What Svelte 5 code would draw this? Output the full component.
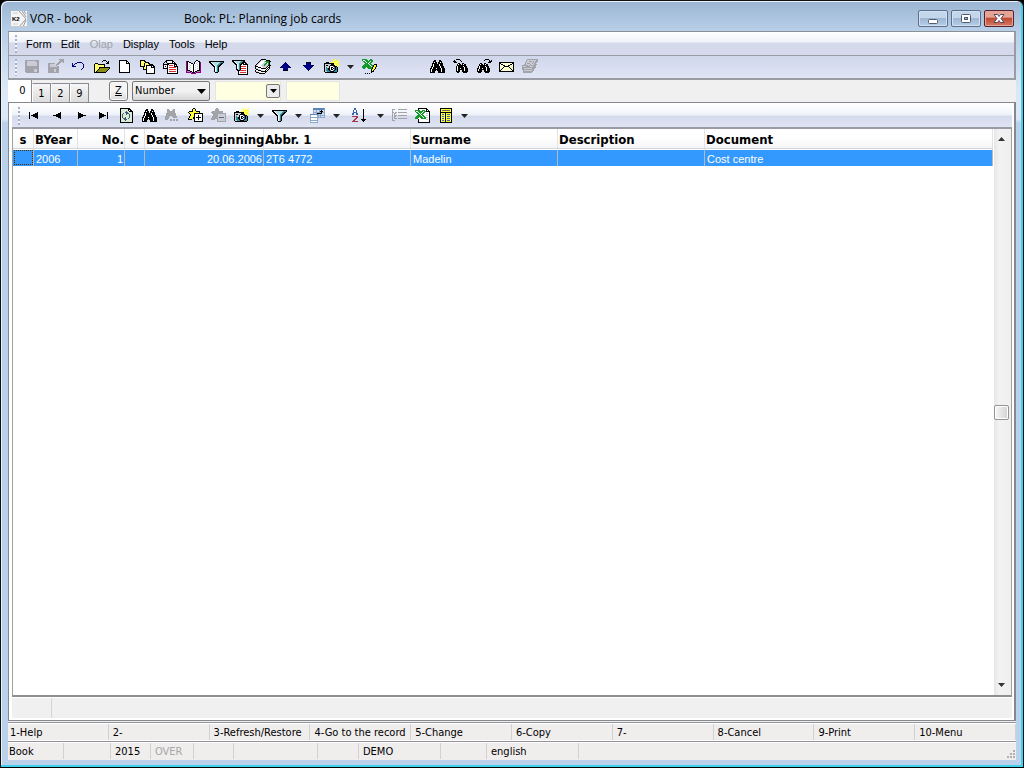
<script>
  const palette = {
    k: '#000000', g: '#a2a4aa', l: '#c9ccd6', d: '#666a70', w: '#ffffff', y: '#ffff31', i: '#ffffa8',
    o: '#8c8c18', b: '#000084', t: '#2a8c94', c: '#b4dce6', r: '#d83030', p: '#8c0084', q: '#d070cc',
    n: '#109a28', m: '#8ca8c8', e: '#d8ecd8', s: '#405878', u: '#3a62b0', a: '#a03848', v: '#d4e0ee', f: '#5a84b8'
  };

  const icons = {
    save: ['', 'gggggggggggggg', 'gglllllllllggg', 'ggllllllllllgg', 'ggllllllllllgg', 'ggllllllllllgg', 'ggllllllllllgg', 'gggggggggggggg', 'gggggggggggggg', 'gggggggggggggg', 'ggggggggglllgg', 'ggggggggglllgg', 'ggggggggglllgg', '.ggggggggggggg'],
    export: ['...........ggggg', '............gggg', '...........ggggg', '..........ggg..g', 'ggggggg..ggg....', 'gglllll.ggg.....', 'ggllllllg.......', 'gglllllllgg.....', 'ggggggggggg.....', 'ggggggggggg.....', 'ggggggllggg.....', 'ggggggllggg.....', 'ggggggllggg.....', 'ggggggggggg.....'],
    undo: ['', '', '', '......bbbbb.....', '.b..bb.....b....', '.b.b........b...', '.bb.........b...', '.bbbb.......b...', '............b...', '...........b....', '..........b.....'],
    open: ['', '.........kkk....', '........k...k.k.', '.............kk.', '.kkk........kkk.', 'kyiykkkkkkk.....', 'kyiyiyiyiyk.....', 'kiyiyiyiyik.....', 'kyiyikkkkkkkkkkk', 'kiyiykoooooooook', 'kyiykoooooooook.', 'kiykoooooooook..', 'kykoooooooook...', 'kkkkkkkkkkkk....'],
    page: ['', '..kkkkkkkk......', '..kwwwwwwkk.....', '..kwwwwwwkwk....', '..kwwwwwwkkkk...', '..kwwwwwwwwwk...', '..kwwwwwwwwwk...', '..kwwwwwwwwwk...', '..kwwwwwwwwwk...', '..kwwwwwwwwwk...', '..kwwwwwwwwwk...', '..kwwwwwwwwwk...', '..kwwwwwwwwwk...', '..kkkkkkkkkkk...'],
    pages: ['', 'kkkkk...........', 'kyiykk..........', 'kiyiykkkk.......', 'kyiykyiykk......', 'kiyikiyiykkkk...', 'kyiykykkkkkkkk..', 'kkkkkikwwwwkwkk.', '...kyikwwwwkkkk.', '...kiykwwwwwwwk.', '...kkkkwwwwwwwk.', '......kwwwwwwwk.', '......kwwwwwwwk.', '......kwwwwwwwk.', '......kkkkkkkkk.'],
    copy: ['', '...kkkkkkk......', '..kkwwwwwkk.....', '.k.k.wwwwkwk....', 'k...kkkkkkkkk...', 'kkkkkkwwwwwkkk..', 'kwwwkwrrrrwkwk..', 'kwkwkwwwwwwkkkk.', 'kwwwkwrrrrrrrwk.', 'kkkkkwwwwwwwwwk.', '....kwrrrrrrrwk.', '....kwwwwwwwwwk.', '....kwrrrrrrrwk.', '....kwwwwwwwwwk.', '....kkkkkkkkkkk.'],
    book: ['', '..........kk....', 'pkk......kwwkk..', 'pkwkk...kwwlwkp.', 'pkwwwkk.kwlwwkp.', 'pkwlwwwkwwwlwkp.', 'pkwwlwwkwlwwwkp.', 'pkwlwwwkwwwlwkp.', 'pkwwlwwkwlwwwkp.', 'pkwlwwwkwwwlwkp.', 'pkwwlwwkwlwwwkp.', 'pkkkwwwkwwwkkkp.', 'pqqqkkwkwkkqqqp.', 'pppppqkkkqppppp.', '.....ppppp......'],
    filter: ['', '', 'kkkkkkkkkkkkkkk.', 'kkwcccccccctttk.', '.kkwccccccttkk..', '..kkwccccttkk...', '...kkwccttkk....', '....kkwctkk.....', '.....kwctk......', '.....kwctk......', '.....kwctk......', '.....kwctk......', '.....kwctk......', '......kkk.......'],
    filterdoc: ['', 'kkkkkkkkkkkkk...', 'kkwccccccttkk...', '.kkwccccttkkkk..', '..kkwccttkkkwkk.', '...kkwctkkwkkkkk', '....kwctkwwwwwwk', '....kwctkrrrrrwk', '....kwctkwwwwwwk', '....kwctkrrrrrwk', '....kkctkwwwwwwk', '.....kkkrrrrrrwk', '......kwwwwwwwwk', '......kwrrrrrrwk', '......kwwwwwwwwk', '......kkkkkkkkkk'],
    books: ['......kkkkk.....', '.....kllwwwkkkk.', '....klwwwlnnnnkk', '...klwwwwlwnnnk.', '..klwwwwllnnwnk.', '.klwwwwllnnllnk.', 'klwwwwlllnlllkkk', 'kkkwwwwlllllkwk.', 'kwwkkkwwlllkwkk.', 'kllwwwkkkkkwkwk.', '.kkllwwwwwwkwk..', 'kwwkkkllwwkwk...', 'kllwwwkkkkkk....', '.kkkllwwwwk.....', '....kkkkkk......'],
    up: ['', '', '', '.......k........', '......bbb.......', '.....bbbbb......', '....bbbbbbb.....', '...bbbbbbbbb....', '..kbbbbbbbbbk...', '.....bbbbb......', '.....bbbbb......', '.....kkkkk......'],
    down: ['', '', '', '.....kkkkk......', '.....bbbbb......', '.....bbbbb......', '..kbbbbbbbbbk...', '...bbbbbbbbb....', '....bbbbbbb.....', '.....bbbbb......', '......bbb.......', '.......k........'],
    camera: ['........y..y..y.', '.........y.y.y..', '.........yyyyyy.', '..kkk..yyyiyiyy.', 'kkkkkkkkkkyyyy..', 'kllllllkkkyiyyy.', 'klkkllkkkkkyy.y.', 'kllllkwwwukkky..', 'kltllkwkkwuktk..', 'klttkkwkwkuktk..', 'klttkkwkkwuktk..', 'kltttkuwwukttk..', 'klltttkkkktttk..', '.kkkkkkkkkkkk...'],
    excelEdit: ['nnnnn...nn......', 'nwwnnn.nnnn.....', '.nnwnnnnwnn.....', '..nnwnnwnn......', '...nnnwnn.......', '..nnnnnwnn..kkk.', '.nnnnnnnwnnkyyk.', 'nnnnnnnnnwnkyyk.', 'nnnn.nnnnnkyyk..', '.nn...nnnnkyyk..', '.........kyyk...', '.........kyk....', '.........kkk....', '.........k......', '...k.k.k........'],
    bino: ['', '....kk...kk.....', '...kkk...kkk....', '...kwkk.kkwk....', '..kkkkk.kkkkk...', '..kwkkkkkwkkk...', '..kwkkkkkwkkk...', '.kkwkkkkkkwkkk..', '.kwkkkkkkkwkkk..', 'kkwkkkwkkkkwkkk.', 'kwkkkkkkkkkwkkk.', 'kwkkkk.kkkkwkkk.', 'kwkkk...kkkwkkk.', 'kkkkk...kkkkkkk.'],
    binoBack: ['...kkkk.........', '.k.....k........', 'kkk.....k.......', '.kkk............', '.....kk..kk.....', '....kwkk.kwkk...', '....kkkkkkkkk...', '...kwkkkkkwkkk..', '...kwkkkkkkwkk..', '...kwkkwkkkwkkk.', '...kwkkkkkkwkkk.', '...kwkk..kkwkkk.', '...kkkk..kkkkkk.', '....kk....kkkk..'],
    binoNext: ['.........kkkk...', '........k....k.k', '.............kkk', '............kkk.', '....kk..kk......', '...kwkk.kwkk....', '...kkkkkkkkk....', '..kwkkkkkwkkk...', '..kwkkkkkkwkk...', '.kkwkkwkkkwkkk..', '.kwkkkkkkkwkkk..', '.kwkkk..kkwkkk..', '.kkkkk..kkkkkk..', '..kkk....kkkk...'],
    mail: ['', '', '', 'kkkkkkkkkkkkkkk.', 'kkwiwiwiwiwiwkk.', 'kwkkwiwiwiwkkwk.', 'kiwikkwiwkkiwik.', 'kwiwikkkkkiwiwk.', 'kiwikiwiwikiwik.', 'kwikwiwiwiwkiwk.', 'kikwiwiwiwiwkik.', 'kkwiwiwiwiwiwkk.', 'kkkkkkkkkkkkkkk.'],
    edit: ['.....ggggggggggg', '....glllllllllgg', '....gllggglglggg', '...glllllllglgg.', '...glgggllglgg..', '..ggllllglllggg.', 'gggggglglggggg..', 'glllgggglllggg..', 'gggggggggggggg..', 'ggllllllllggg...', 'gggggggggggg....', '.gllllllllgg....', '.gggggggggg.....', '.ggggggggg......'],
    first: ['', '', '', '', '..k.......k.....', '..k.....kkk.....', '..k...kkkkk.....', '..k.kkkkkkk.....', '..k...kkkkk.....', '..k.....kkk.....', '..k.......k.....'],
    prev: ['', '', '', '', '..........k.....', '........kkk.....', '......kkkkk.....', '...kkkkkkkk.....', '......kkkkk.....', '........kkk.....', '..........k.....'],
    next: ['', '', '', '', '.....k..........', '.....kkk........', '.....kkkkk......', '.....kkkkkkkk...', '.....kkkkk......', '.....kkk........', '.....k..........'],
    last: ['', '', '', '', '...k.......k....', '...kkk.....k....', '...kkkkk...k....', '...kkkkkkk.k....', '...kkkkk...k....', '...kkk.....k....', '...k.......k....'],
    refresh: ['.kkkkkkkkkk.....', '.keeeeeeekkk....', '.keeeeeeekwkk...', '.keeeeeseekkkk..', '.keeeessseeeek..', '.keeseessseeek..', '.keseeeseeseek..', '.keseeeeeeseek..', '.keseeeeeeseek..', '.keseeseeeseek..', '.keessseeseeek..', '.keeessseeeeek..', '.keeeeseeeeeek..', '.keeeeeeeeeeek..', '.kkkkkkkkkkkkk..'],
    binoOff: ['', '..gg....gg......', '..ggg..ggg......', '..gggggggg......', '..gggggggg......', '.gggggggggg.....', '.gggggggggg.....', '.gggggggggg.....', 'ggggg..ggggg....', 'gggg....gggg....', 'gggg............', 'ggg..gg.gg.gg...', '.....gg.gg.gg...'],
    star: ['.....kk.........', '....kyyk........', '....kyyk........', '.kkkkyyykkkk....', 'kyyyyyyyyyyk....', '.kyyyykkkkkkkkk.', '..kyyykwwwwwwwk.', '..kyyykwwwkwwwk.', '.kyyyykwwwkwwwk.', '.kyyykkwkkkkkwk.', 'kyyyykkwwwkwwwk.', 'kkkk..kwwwkwwwk.', '......kwwwwwwwk.', '......kkkkkkkkk.'],
    starOff: ['.....gg.........', '....gggg........', '....gggg........', '.ggggggggggg....', 'gggggggggggg....', '.gggggggggggggg.', '..ggggglllllllg.', '..ggggglllllllg.', '.gggggglllllllg.', '.ggggggldddddlg.', 'ggggggglllllllg.', 'gggg..glllllllg.', '......glllllllg.', '......ggggggggg.'],
    sheets: ['...ffffffffffff.', '...fffffffffffm.', '...mvvmvvmvkvvm.', '...mvvmvvmkkkvm.', '...mmmmmmmmkmmm.', '...mvvmkkkkkvvm.', 'ffffffffmvmvvvm.', 'mwwwwwwmmmmmmmm.', 'mwwwwwwmmvmvvvm.', 'mmmmmmmmmmmmmmm.', 'mwwwwwwm........', 'mwwwwwwm........', 'mmmmmmmm........', 'mwwwwwwm........', 'mmmmmmmm........'],
    sort: ['...uu...........', '...uu.......k...', '..u..u......k...', '..u..u......k...', '..uuuu......k...', '.uu..uu.....k...', '.uu..uu.....k...', '............k...', '.aaaaaa.....k...', '.....aa.....k...', '....aa......k...', '...aa.....kkkkk.', '..aa.......kkk..', '.aaaaaa.....k...'],
    group: ['', 'ggg...ggggggggg.', 'g...............', 'g...............', 'gg.gg.ggggggggg.', 'g.gg............', 'g.g.............', 'g.ggg.ggggggggg.', 'g.gg............', 'g.g.............', 'g.ggg.ggggggggg.', 'g...............', 'ggg.............'],
    excel: ['...kkkkkkkkk....', '...kwwwwwwwkk...', 'nnnnnwwnnnwkwk..', 'nwwnnnnnwnnkkkk.', '.nnwnnnwnnwwwwk.', '..nnwnwnnwwllwk.', '...nnwnnwwwwwwk.', '..nnnnwnnwwllwk.', '.nnnnnnwnnwwwwk.', 'nnnnwnnnwnnllwk.', 'nnnwwwnnnnnwwwk.', '...kwwwwwwwllwk.', '...kwwwwwwwwwwk.', '...kwwwwwwwwwwk.', '...kkkkkkkkkkkk.'],
    list: ['..kkkkkkkkkkkk..', '..kyyyyyyyyyyk..', '..kyddddddddyk..', '..kyyyyyyyyyyk..', '..kkkkkkkkkkkk..', '..kyyyykyyyyyk..', '..kyuuykyuuuyk..', '..kyyyykyyyyyk..', '..kyuuykyuuuyk..', '..kyyyykyyyyyk..', '..kyuuykyuuuyk..', '..kyyyykyyyyyk..', '..kyuuykyuuuyk..', '..kyyyykyyyyyk..', '..kkkkkkkkkkkk..']
  };

  // Merge runs of equal pixels into one path for each colour.
  function toPaths(rows) {
    const out = {};
    rows.forEach((row, y) => {
      let x = 0;
      while (x < row.length) {
        const ch = row[x];
        let n = 1;
        while (row[x + n] === ch) n++;
        if (palette[ch]) out[ch] = (out[ch] ?? '') + `M${x} ${y}h${n}v1h-${n}z`;
        x += n;
      }
    });
    return Object.entries(out).map(([ch, d]) => ({ fill: palette[ch], d }));
  }

  const menus = ['Form', 'Edit', 'Olap', 'Display', 'Tools', 'Help'];
  const mainTools = [
    ['save', 'Save', true], ['export', 'Save and close', true], ['undo', 'Undo'], ['open', 'Open'], ['page', 'New'],
    ['pages', 'Copy pages'], ['copy', 'Locked copy'], ['book', 'Book'], ['filter', 'Filter'], ['filterdoc', 'Filter document'],
    ['books', 'Change book'], ['up', 'Previous'], ['down', 'Next'], ['camera', 'Snapshot'], ['arrow', 'Snapshot options'],
    ['excelEdit', 'Edit in Excel'], ['gap', ''], ['bino', 'Find'], ['binoBack', 'Find previous'], ['binoNext', 'Find next'],
    ['mail', 'Mail'], ['edit', 'Edit notes', true]
  ];
  const bookTools = [
    ['first', 'First record'], ['prev', 'Previous record'], ['next', 'Next record'], ['last', 'Last record'],
    ['refresh', 'Refresh'], ['bino', 'Search'], ['binoOff', 'Search again', true], ['star', 'Add to container'],
    ['starOff', 'Remove from container', true], ['camera', 'Take snapshot'], ['arrow', 'Snapshots'], ['filter', 'Apply filter'],
    ['arrow', 'Filters'], ['sheets', 'Views'], ['arrow', 'More views'], ['sort', 'Sort'], ['arrow', 'Sort options'],
    ['group', 'Group', true], ['excel', 'Export to Excel'], ['list', 'Columns'], ['arrow', 'Column options']
  ];
  const columns = [
    ['s', 'c-s'], ['BYear', 'c-year'], ['No.', 'c-no'], ['C', 'c-c'], ['Date of beginning', 'c-date'],
    ['Abbr. 1', 'c-wide'], ['Surname', 'c-wide'], ['Description', 'c-wide'], ['Document', 'c-rest']
  ];
  const record = ['', '2006', '1', '', '20.06.2006', '2T6 4772', 'Madelin', '', 'Cost centre'];
  const keys = ['1-Help', '2-', '3-Refresh/Restore', '4-Go to the record', '5-Change', '6-Copy', '7-', '8-Cancel', '9-Print', '10-Menu'];
  const status = ['Book', '', '2015', 'OVER', '', '', '', 'DEMO', '', 'english', ''];
  let tab = $state(0);
</script>

{#snippet tools(items)}
  {#each items as [name, label, off]}
    {#if name === 'gap'}
      <span class="gap"></span>
    {:else if name === 'arrow'}
      <button class="tool drop" aria-label={label}><svg width="7" height="4" viewBox="0 0 7 4"><path fill="#222" d="M0 0h7L3.500 4z" /></svg></button>
    {:else}
      <button class="tool" class:sort={name === 'sort'} aria-label={label} disabled={off}>
        <svg width="16" height="16" viewBox="0 0 16 16" shape-rendering="crispEdges">
          {#each toPaths(icons[name]) as p}<path fill={p.fill} d={p.d} />{/each}
        </svg>
      </button>
    {/if}
  {/each}
{/snippet}

<div class="window">
  <header class="title">
    <svg class="logo" width="16" height="16" viewBox="0 0 16 16">
      <path fill="#f5f5f5" d="M0 0h16v16H0z" />
      <path fill="none" stroke="#999" d="M8 0l7 8-7 8M11 0l4 6M15 9l-3 7M13 0l2 3" />
      <path fill="none" stroke="#ccc" d="M0 15.500h16M2 2h5M2 13h5" />
      <text x="1" y="10" font-size="6" font-weight="bold" font-family="Liberation Sans, sans-serif">K2</text>
    </svg>
    <span class="app">VOR - book</span>
    <span class="doc">Book: PL: Planning job cards</span>
    <div class="controls">
      <button aria-label="Minimize"><svg width="12" height="14" viewBox="0 0 12 14"><rect x="1.500" y="7.500" width="9" height="4" rx="1" fill="#fff" stroke="#4e5a70" /></svg></button>
      <button aria-label="Restore"><svg width="12" height="14" viewBox="0 0 12 14"><rect x="1.500" y="2.500" width="9" height="8" rx="1" fill="#fff" stroke="#4e5a70" /><rect x="4.500" y="5.500" width="3" height="2" fill="#8fa9c8" stroke="#4e5a70" /></svg></button>
      <button class="close" aria-label="Close"><svg width="12" height="14" viewBox="0 0 12 14"><path d="M1 2.500h3.500L6 4.500l1.500-2H11L8 6.500l3 4H7.500L6 8.500l-1.500 2H1l3-4z" fill="#fff" stroke="#4e4a60" /></svg></button>
    </div>
  </header>

  <main class="client">
    <nav class="menubar grip">
      {#each menus as m}<button disabled={m === 'Olap'}>{m}</button>{/each}
    </nav>
    <div class="toolbar grip">{@render tools(mainTools)}</div>

    <div class="tabrow">
      <div class="tabs">
        {#each [0, 1, 2, 9] as n}
          <button class="tab" class:active={tab === n} onclick={() => (tab = n)}>{n}</button>
        {/each}
      </div>
      <button class="zbtn"><u>Z</u></button>
      <div class="combo">
        <select aria-label="Search by"><option>Number</option></select>
        <svg width="9" height="5" viewBox="0 0 9 5"><path d="M0 0h9L4.500 5z" /></svg>
      </div>
      <div class="from">
        <input aria-label="From" />
        <button aria-label="Choose value"><svg width="7" height="4" viewBox="0 0 7 4"><path d="M0 0h7L3.500 4z" /></svg></button>
      </div>
      <input class="to" aria-label="To" />
    </div>

    <section class="panel">
      <div class="toolbar light grip">{@render tools(bookTools)}</div>
      <div class="grid">
        <div class="rows">
          <table>
            <thead>
              <tr>{#each columns as [name, cls]}<th class={cls}>{name}</th>{/each}</tr>
            </thead>
            <tbody>
              <tr>{#each record as v, i}<td class={columns[i][1]}>{v}</td>{/each}</tr>
            </tbody>
          </table>
        </div>
        <div class="scroll">
          <button aria-label="Scroll up"><svg width="7" height="4" viewBox="0 0 7 4"><path fill="#333" d="M0 4h7L3.500 0z" /></svg></button>
          <div class="track"><span class="thumb"></span></div>
          <button aria-label="Scroll down"><svg width="7" height="4" viewBox="0 0 7 4"><path fill="#333" d="M0 0h7L3.500 4z" /></svg></button>
        </div>
      </div>
      <div class="summary"><span></span></div>
    </section>

    <div class="keys">{#each keys as k}<button>{k}</button>{/each}</div>
    <footer class="status">
      {#each status as s}<span class:dim={s === 'OVER'}>{s}</span>{/each}
      <svg class="size" width="9" height="9" viewBox="0 0 9 9"><path fill="#b4b0b0" d="M6 0h2v2H6zM3 3h2v2H3zM6 3h2v2H6zM0 6h2v2H0zM3 6h2v2H3zM6 6h2v2H6z" /></svg>
    </footer>
  </main>
</div>

<style>
  :global(body) { background: #000; }
  * { box-sizing: border-box; }
  button, input, select { margin: 0; padding: 0; border: 0; border-radius: 0; background: none; font: inherit; color: inherit; }
  svg { display: block; flex: none; }
  .window {
    display: flex; flex-direction: column; height: 100vh; padding: 0 6px 6px;
    border: 1px solid #111; border-bottom-color: #000; border-radius: 7px 7px 0 0;
    background: linear-gradient(#9bb5d2 0, #b8cfe8 30px, #dce8f6 90px, #dce8f6 118px, #b9d1ea 122px);
    box-shadow: inset -2px -2px 0 #3fd0ee, inset 1px 1px 0 #e8f2fb;
    font: 11px/14px "DejaVu Sans Condensed", "DejaVu Sans", sans-serif; color: #000;
  }
  .title { display: flex; flex: none; align-items: center; height: 30px; padding: 5px 3px 0 4px; font: 12px/16px "Open Sans", "Noto Sans", sans-serif; }
  .app { width: 154px; margin-left: 3px; }
  .doc { flex: 1; }
  .controls { display: flex; gap: 3px; }
  .controls button {
    display: flex; align-items: center; justify-content: center; width: 30px; height: 17px;
    border: 1px solid #5b6f8c; border-radius: 2px; box-shadow: inset 0 0 0 1px #d3e2f2;
    background: linear-gradient(#c3d6ea 45%, #9db7d3 50%, #b7cee6);
  }
  .controls .close { border-color: #56202c; box-shadow: inset 0 0 0 1px #e5a79d; background: linear-gradient(#e5a396 40%, #c04a34 50%, #d27a62); }
  .client { display: flex; flex: 1; flex-direction: column; min-height: 0; margin: 0 1px 1px; background: #f0f0f0; }
  .grip { position: relative; }
  .grip::before {
    content: ""; position: absolute; left: 6px; top: 3px; bottom: 2px; width: 2px;
    background: repeating-linear-gradient(#aab0c4 0 2px, #f4f6fb 2px 4px);
  }
  .menubar {
    display: flex; flex: none; align-items: flex-start; height: 25px; padding: 3px 0 0 12px; border: 1px solid #9a9ca4; border-top-color: #8a8e98; border-width: 1px 2px 1px 1px;
    background: linear-gradient(#fff, #eef2f9 10px, #d4daec 11px, #d4daec); font: 11px/18px "Liberation Sans", Arial, sans-serif;
  }
  .menubar button { padding: 0 4px 0 5px; }
  .menubar button:nth-child(n + 2) { padding-right: 5px; }
  .menubar button:disabled { color: #a0a2a8; }
  .toolbar {
    display: flex; flex: none; align-items: center; height: 24px; padding-left: 12px; border: 1px solid #9a9ca4; border-width: 0 2px 2px 1px;
    background: linear-gradient(#d0d7eb, #e0e5f5);
  }
  .light { height: 25px; padding-left: 11px; border-width: 0 0 2px; background: linear-gradient(#fff, #eef2f9 11px, #d4daec 12px, #e0e5f5); }
  .tool { display: flex; flex: none; align-items: center; justify-content: center; width: 23px; height: 20px; }
  .drop { width: 15px; }
  .sort { width: 29px; }
  .gap { width: 45px; }
  .tabrow { display: flex; flex: none; align-items: center; height: 22px; }
  .tabs { display: flex; align-items: flex-end; align-self: stretch; width: 101px; }
  .tab { width: 19px; height: 19px; border: 1px solid #888c94; border-bottom: 0; border-left-color: #fff; padding-top: 2px; background: linear-gradient(#f6f6f6, #dcdcdc); }
  .active { align-self: stretch; width: 24px; height: 22px; padding: 0 0 1px 6px; border-width: 0 1px 0 0; background: #fff; }
  .zbtn { width: 19px; height: 20px; border: 1px solid #777; border-radius: 3px; background: linear-gradient(#f4f4f4 50%, #dadada); box-shadow: inset 0 0 0 1px #fafafa; }
  .combo { position: relative; width: 78px; height: 20px; margin: 0 5px 0 4px; }
  select { width: 100%; height: 100%; padding-left: 2px; border: 1px solid #777; border-radius: 2px; appearance: none; background: linear-gradient(#f2f2f2 50%, #d6d6d6); }
  .combo svg { position: absolute; right: 4px; top: 8px; pointer-events: none; }
  .from { display: flex; width: 66px; height: 20px; margin-right: 5px; border: 1px solid #e3e3e8; background: #ffffe1; }
  .from input { flex: 1; min-width: 0; }
  .from button { display: flex; align-items: center; justify-content: center; width: 14px; height: 14px; margin: 2px 0 2px 1px; border: 1px solid #777; border-radius: 2px; background: #ececec; }
  .to { width: 54px; height: 20px; border: 1px solid #e3e3e8; background: #ffffe1; }
  .panel { display: flex; flex: 1; flex-direction: column; min-height: 0; padding: 1px 2px 2px 3px; border: 1px solid #85888f; border-width: 1px 2px 1px 1px; background: #fff; }
  .grid { display: flex; flex: 1; min-height: 0; border: 1px solid #a0a0a0; border-width: 0 1px 2px; border-bottom-color: #8e8e92; }
  .rows { flex: 1; min-width: 0; background: #fff; }
  table { width: 100%; border-collapse: separate; border-spacing: 0; table-layout: fixed; }
  th { height: 20px; padding: 2px 1px 0; border-bottom: 1px solid #d5d5d5; border-right: 1px solid #e2e2e2; background: linear-gradient(#fff 40%, #f4f5f6); font: bold 13px/17px "DejaVu Sans Condensed", "DejaVu Sans", sans-serif; text-align: left; white-space: nowrap; }
  td { height: 17px; padding: 1px 2px 0; border-right: 1px solid #b4b8c0; border-top: 1px solid #fff; background: #3399ff; color: #fff; font: 11px/14px "Liberation Sans", Arial, sans-serif; white-space: nowrap; }
  .c-s { width: 21px; }
  th.c-s, th.c-c { text-align: center; }
  td.c-s { outline: 1px dotted #4a2a00; outline-offset: -2px; }
  .c-year { width: 44px; }
  .c-no { width: 47px; text-align: right; }
  .c-c { width: 20px; }
  .c-date { width: 119px; text-align: right; }
  th.c-no, th.c-date { padding-right: 0; }
  td.c-no, td.c-date { padding-right: 1px; }
  .c-wide { width: 147px; }
  .scroll { display: flex; flex: none; flex-direction: column; width: 18px; border-left: 1px solid #fff; background: linear-gradient(90deg, #e6e6e6, #f2f2f2 30%, #efefef); }
  .scroll button { display: flex; align-items: center; justify-content: center; width: 15px; height: 20px; }
  .track { display: flex; flex: 1; align-items: center; }
  .thumb { width: 15px; height: 15px; border: 1px solid #949494; border-radius: 2px; background: linear-gradient(90deg, #f7f7f7, #d2d2d4); box-shadow: inset 0 0 0 1px #fff; }
  .summary { display: flex; flex: none; height: 20px; margin-top: 1px; background: #f0f0f0; }
  .summary span { width: 40px; border-right: 1px solid #d4d4d4; }
  .keys { display: grid; flex: none; grid-template-columns: repeat(10, 1fr); height: 20px; margin-top: 1px; border: 1px solid #929298; border-width: 1px 0; background: #f0eded; box-shadow: inset 0 1px 0 #fff, inset 0 -1px 0 #fff; }
  .keys button { margin: 1px 0; padding: 2px 0 0 4px; border-right: 1px solid #d2d0d2; text-align: left; white-space: nowrap; }
  .keys button:first-child { padding-left: 2px; }
  .status { position: relative; display: grid; flex: none; grid-template-columns: 56px 47px 40px 43px 40px 84px 41px 82px 46px 92px 1fr; height: 18px; padding: 1px 0; background: #f0eded; box-shadow: inset 0 1px 0 #fff; }
  .status span { padding: 2px 0 0 4px; border-right: 1px solid #d2d0d2; }
  .status span:first-child { padding-left: 1px; }
  .status span:nth-last-of-type(1) { border: 0; }
  .status .dim { color: #a8a6a8; }
  .size { position: absolute; right: 0; bottom: 1px; }
</style>
